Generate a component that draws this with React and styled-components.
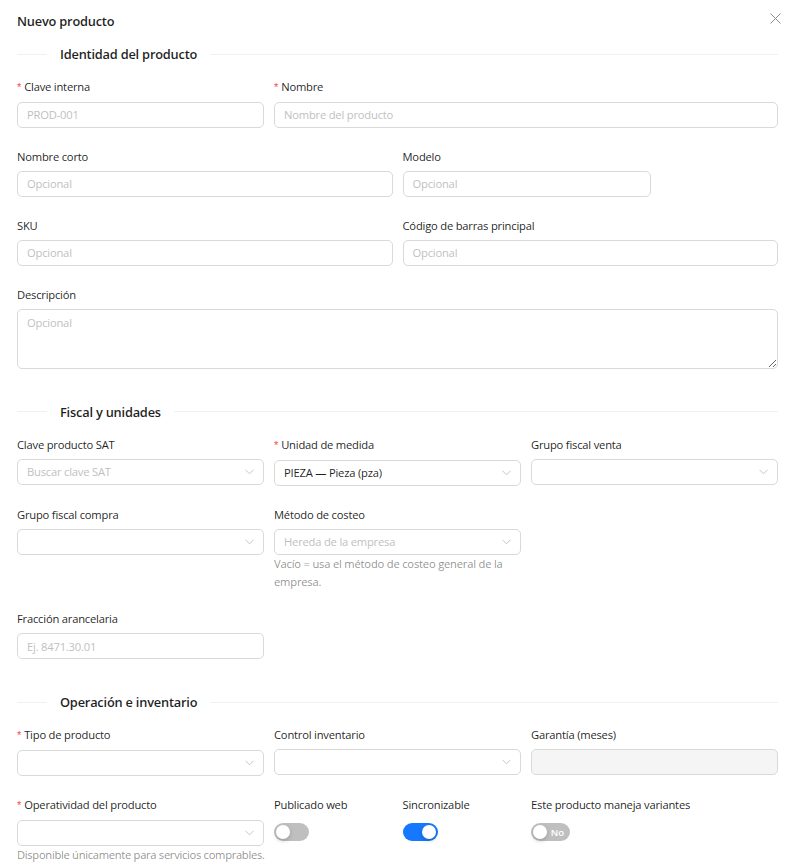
import React from 'react';
import styled, { createGlobalStyle } from 'styled-components';

const GlobalStyle = createGlobalStyle`
  * { box-sizing: border-box; }
  body {
    margin: 0;
    background: #fff;
    font-family: "Open Sans", "Noto Sans", "Liberation Sans", sans-serif;
    letter-spacing: -0.2px;
    color: rgba(0, 0, 0, 0.88);
  }
`;

const Modal = styled.div`
  width: 796px;
  padding: 0 18px 0 17px;
`;

const Header = styled.div`
  height: 31px;
  padding-top: 12px;
  display: flex;
  align-items: flex-start;
  justify-content: space-between;
  position: relative;
`;

const Title = styled.h2`
  margin: 0;
  font-size: 12.8px;
  font-weight: 600;
  line-height: 18px;
`;

const Close = styled.button`
  position: absolute;
  right: -4px;
  top: 11px;
  width: 14px;
  height: 14px;
  padding: 0;
  border: 0;
  background: none;
  display: flex;
  align-items: center;
  justify-content: center;
`;

const Divider = styled.div`
  display: flex;
  align-items: center;
  margin: 14px 0 15px;
  height: 18px;
  &::before {
    content: '';
    width: 30px;
    border-top: 1px solid #f0f0f0;
  }
  &::after {
    content: '';
    flex: 1;
    border-top: 1px solid #f0f0f0;
  }
  span {
    padding: 0 13px;
    font-size: 12.8px;
    font-weight: 600;
    line-height: 18px;
    color: rgba(0, 0, 0, 0.88);
  }
`;

const Grid = styled.div`
  display: grid;
  grid-template-columns: repeat(6, 1fr);
  column-gap: 10px;
`;

const Item = styled.div`
  grid-column: span ${(p) => p.span || 2};
  margin-bottom: 20px;
  min-width: 0;
`;

const Label = styled.label`
  display: block;
  font-size: 11.2px;
  line-height: 17.6px;
  padding-bottom: 5.4px;
  color: rgba(0, 0, 0, 0.88);
  white-space: nowrap;
`;

const Req = styled.span`
  color: #ff4d4f;
  margin-right: 3px;
  font-family: SimSun, "Liberation Sans", sans-serif;
`;

const Input = styled.input`
  display: block;
  width: ${(p) => p.width || '100%'};
  height: 26px;
  padding: 3px 9px;
  border: 1px solid #d9d9d9;
  border-radius: 5px;
  font-family: inherit;
  letter-spacing: inherit;
  font-size: 11.2px;
  color: rgba(0, 0, 0, 0.88);
  background: ${(p) => (p.disabled ? '#f5f5f5' : '#fff')};
  outline: none;
  &::placeholder { color: #bfbfbf; }
`;

const TextArea = styled.textarea`
  display: block;
  width: 100%;
  height: 60px;
  padding: 4px 9px;
  border: 1px solid #d9d9d9;
  border-radius: 5px;
  font-family: inherit;
  letter-spacing: inherit;
  font-size: 11.2px;
  line-height: 17.6px;
  resize: vertical;
  outline: none;
  &::placeholder { color: #bfbfbf; }
`;

const SelectBox = styled.div`
  height: 26px;
  display: flex;
  align-items: center;
  justify-content: space-between;
  padding: 0 9px;
  border: 1px solid #d9d9d9;
  border-radius: 5px;
  font-size: 11.2px;
  color: ${(p) => (p.placeholder ? '#bfbfbf' : 'rgba(0, 0, 0, 0.88)')};
  background: #fff;
`;

const Help = styled.div`
  font-size: 11.2px;
  line-height: 17.6px;
  color: rgba(0, 0, 0, 0.45);
  white-space: ${(p) => (p.nowrap ? 'nowrap' : 'normal')};
  letter-spacing: ${(p) => (p.nowrap ? '-0.3px' : 'inherit')};
`;

const SwitchWrap = styled.div`
  height: 26px;
  display: flex;
  align-items: center;
`;

const Switch = styled.button`
  position: relative;
  width: ${(p) => (p.text ? '39px' : '35px')};
  height: 17.6px;
  border: 0;
  border-radius: 9px;
  background: ${(p) => (p.on ? '#1677ff' : 'rgba(0, 0, 0, 0.25)')};
  color: #fff;
  font-family: inherit;
  font-size: 9.6px;
  font-weight: 600;
  text-align: ${(p) => (p.on ? 'left' : 'right')};
  padding: 0 6px;
  &::after {
    content: '';
    position: absolute;
    top: 1.6px;
    left: ${(p) => (p.on ? 'calc(100% - 16px)' : '1.6px')};
    width: 14.4px;
    height: 14.4px;
    border-radius: 50%;
    background: #fff;
    box-shadow: 0 2px 4px rgba(0, 35, 11, 0.2);
  }
`;

const Chevron = () => (
  <svg width="9" height="6" viewBox="0 0 9 6" fill="none">
    <path d="M0.5 0.8 L4.5 4.8 L8.5 0.8" stroke="#bfbfbf" strokeWidth="0.9" />
  </svg>
);

const Select = ({ value, placeholder }) => (
  <SelectBox placeholder={!value ? 1 : undefined}>
    <span>{value || placeholder}</span>
    <Chevron />
  </SelectBox>
);

const Field = ({ label, required, span, children, help, helpNowrap }) => (
  <Item span={span}>
    <Label>
      {required && <Req>*</Req>}
      {label}
    </Label>
    {children}
    {help && <Help nowrap={helpNowrap}>{help}</Help>}
  </Item>
);

const App = () => (
  <Modal>
    <GlobalStyle />
    <Header>
      <Title>Nuevo producto</Title>
      <Close aria-label="Cerrar">
        <svg width="11" height="11" viewBox="0 0 11 11">
          <path d="M0.5 0.5 L10.5 10.5 M10.5 0.5 L0.5 10.5" stroke="#8c8c8c" strokeWidth="1" />
        </svg>
      </Close>
    </Header>

    <Divider><span>Identidad del producto</span></Divider>
    <Grid>
      <Field label="Clave interna" required span={2}>
        <Input placeholder="PROD-001" />
      </Field>
      <Field label="Nombre" required span={4}>
        <Input placeholder="Nombre del producto" />
      </Field>
      <Field label="Nombre corto" span={3}>
        <Input placeholder="Opcional" />
      </Field>
      <Field label="Modelo" span={3}>
        <Input placeholder="Opcional" width="248px" />
      </Field>
      <Field label="SKU" span={3}>
        <Input placeholder="Opcional" />
      </Field>
      <Field label="Código de barras principal" span={3}>
        <Input placeholder="Opcional" />
      </Field>
      <Field label="Descripción" span={6}>
        <TextArea placeholder="Opcional" />
      </Field>
    </Grid>

    <Divider><span>Fiscal y unidades</span></Divider>
    <Grid>
      <Field label="Clave producto SAT">
        <Select placeholder="Buscar clave SAT" />
      </Field>
      <Field label="Unidad de medida" required>
        <Select value="PIEZA — Pieza (pza)" />
      </Field>
      <Field label="Grupo fiscal venta">
        <Select />
      </Field>
      <Field label="Grupo fiscal compra">
        <Select />
      </Field>
      <Field label="Método de costeo" help="Vacío = usa el método de costeo general de la empresa.">
        <Select placeholder="Hereda de la empresa" />
      </Field>
      <Item span={2} />
      <Field label="Fracción arancelaria">
        <Input placeholder="Ej. 8471.30.01" />
      </Field>
    </Grid>

    <Divider><span>Operación e inventario</span></Divider>
    <Grid>
      <Field label="Tipo de producto" required>
        <Select />
      </Field>
      <Field label="Control inventario">
        <Select />
      </Field>
      <Field label="Garantía (meses)">
        <Input disabled />
      </Field>
      <Field
        label="Operatividad del producto"
        required
        help="Disponible únicamente para servicios comprables."
        helpNowrap
      >
        <Select />
      </Field>
      <Field label="Publicado web" span={1}>
        <SwitchWrap><Switch /></SwitchWrap>
      </Field>
      <Field label="Sincronizable" span={1}>
        <SwitchWrap><Switch on /></SwitchWrap>
      </Field>
      <Field label="Este producto maneja variantes" span={2}>
        <SwitchWrap><Switch text>No</Switch></SwitchWrap>
      </Field>
    </Grid>
  </Modal>
);

export default App;
